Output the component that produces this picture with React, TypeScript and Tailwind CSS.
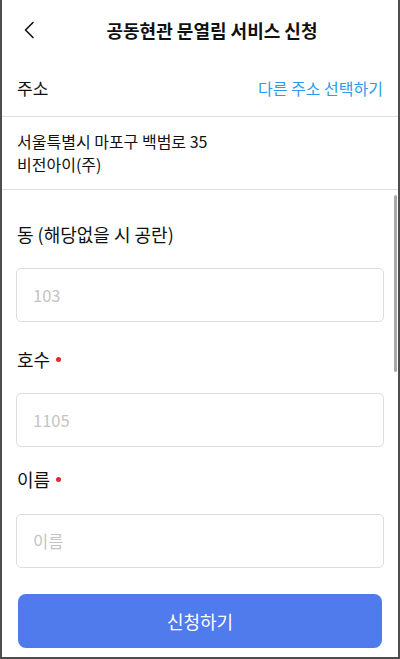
import React from "react";

const font = { fontFamily: '"Noto Sans CJK KR", "Noto Sans", sans-serif' };

function Label({ text, required }: { text: string; required?: boolean }) {
  return (
    <div className="flex items-center h-[24px] text-[18px] leading-[24px] text-[#111]">
      <span>{text}</span>
      {required && <span className="ml-[6px] w-[5px] h-[5px] rounded-full bg-[#e02b2b]" />}
    </div>
  );
}

function Field({ placeholder }: { placeholder: string }) {
  return (
    <div className="h-[54px] rounded-[5px] border border-[#dcdcdc] flex items-center px-[16px] text-[16.5px] text-[#c4c4c4]">
      {placeholder}
    </div>
  );
}

export default function App() {
  return (
    <div className="w-[400px] h-[659px] bg-[#4d4d4d] pl-[2px] pr-[2px] pb-[2px] overflow-hidden" style={font}>
      <div className="relative w-full h-full bg-white flex flex-col">
        <div className="relative h-[60px] flex items-center justify-center pl-[24px]">
          <svg className="absolute left-[20px] top-[21px]" width="16" height="18" viewBox="0 0 16 18" fill="none">
            <path d="M11 1.5 L3.5 9 L11 16.5" stroke="#111" strokeWidth="1.6" strokeLinecap="round" strokeLinejoin="round" />
          </svg>
          <span className="text-[18px] font-bold text-[#111]">공동현관 문열림 서비스 신청</span>
        </div>
        <div className="h-[57px] flex items-center justify-between px-[15px] border-b border-[#dedede]">
          <span className="text-[17px] text-[#111]">주소</span>
          <span className="text-[16px] text-[#2a9bf0]">다른 주소 선택하기</span>
        </div>
        <div className="h-[73px] flex flex-col justify-center px-[15px] border-b border-[#dedede] text-[16px] leading-[23px] text-[#111]">
          <div>서울특별시 마포구 백범로 35</div>
          <div>비전아이(주)</div>
        </div>
        <div className="relative flex-1 px-[14px]">
          <div className="absolute right-[1px] top-[5px] w-[3px] h-[177px] rounded-full bg-[#a9a9a9]" />
          <div className="mt-[32px] pl-[1px]">
            <Label text="동 (해당없을 시 공란)" />
          </div>
          <div className="mt-[22px]">
            <Field placeholder="103" />
          </div>
          <div className="mt-[25px] pl-[1px]">
            <Label text="호수" required />
          </div>
          <div className="mt-[22px]">
            <Field placeholder="1105" />
          </div>
          <div className="mt-[20px] pl-[1px]">
            <Label text="이름" required />
          </div>
          <div className="mt-[23px]">
            <Field placeholder="이름" />
          </div>
          <div className="mt-[26px] px-[2px]">
            <div className="h-[54px] rounded-[8px] bg-[#4f7bec] flex items-center justify-center text-[18px] text-white">
              신청하기
            </div>
          </div>
        </div>
      </div>
    </div>
  );
}
